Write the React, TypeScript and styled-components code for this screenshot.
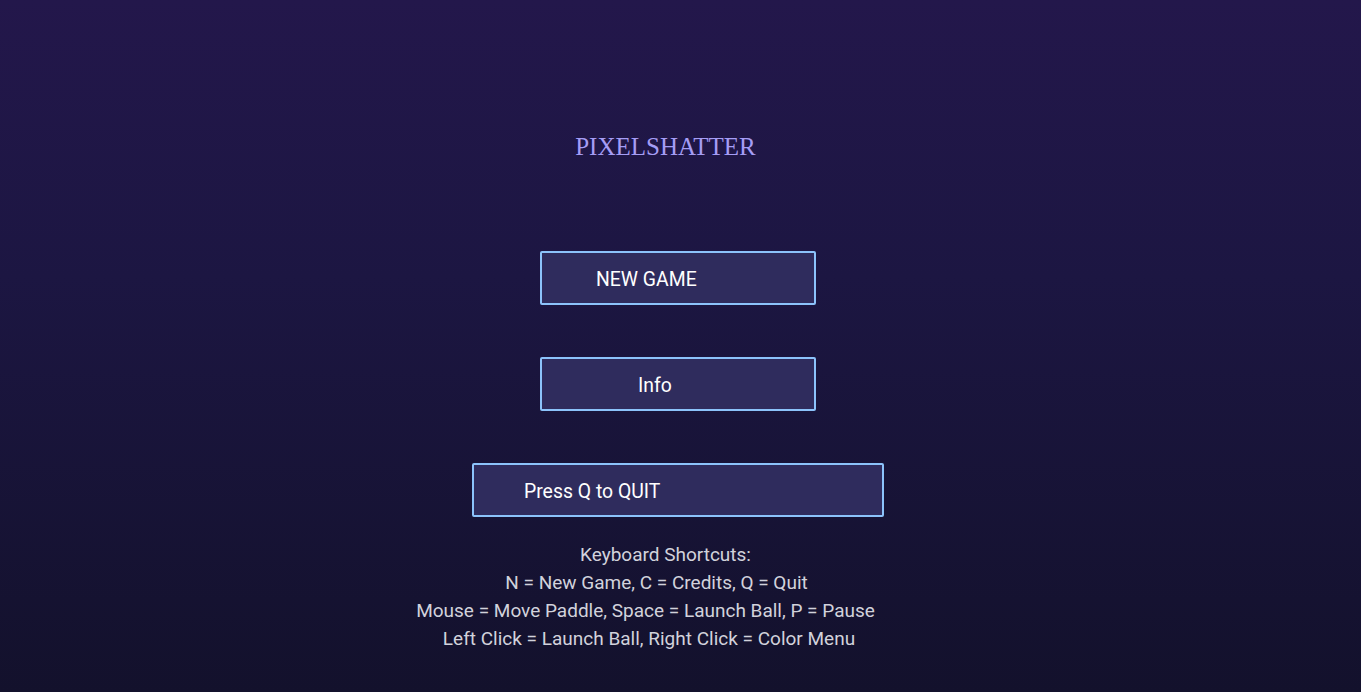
import React from "react";
import styled, { createGlobalStyle } from "styled-components";

const Global = createGlobalStyle`
  html, body { margin: 0; padding: 0; height: 100%; }
  body { background: #13112c; overflow: hidden; }
  #root { height: 100%; }
`;

const Screen = styled.div`
  width: 100vw;
  height: 100vh;
  background: linear-gradient(180deg, #23174b 0%, #1c1642 40%, #13112c 100%);
  display: flex;
  flex-direction: column;
  align-items: center;
  box-sizing: border-box;
  padding-top: 132px;
  padding-right: 5px;
`;

const Title = styled.h1`
  margin: 0 25px 0 0;
  font-family: "Liberation Serif", "Times New Roman", serif;
  font-weight: 400;
  font-size: 25px;
  line-height: 30px;
  color: #a59df5;
`;

const Menu = styled.div`
  margin-top: 89px;
  display: flex;
  flex-direction: column;
  align-items: center;
  gap: 52px;
`;

const MenuButton = styled.button<{ $w: number; $pad: number }>`
  width: ${(p) => p.$w}px;
  height: 54px;
  box-sizing: border-box;
  border: 2px solid #8cc3fb;
  border-radius: 2px;
  background: #2f2c5d;
  color: #ffffff;
  font-family: Roboto, "Liberation Sans", Arial, sans-serif;
  font-size: 19.4px;
  text-align: left;
  padding: 2px 0 0 ${(p) => p.$pad}px;
  margin: 0;
  cursor: pointer;
`;

const Shortcuts = styled.div`
  margin-top: 24px;
  display: flex;
  flex-direction: column;
  align-items: center;
  font-family: Roboto, "Liberation Sans", Arial, sans-serif;
  font-size: 19px;
  line-height: 28px;
  color: #d2d2dc;
  text-align: center;
`;

const Line = styled.div<{ $shift: number }>`
  margin-right: ${(p) => p.$shift * 2}px;
  white-space: nowrap;
`;

export default function App() {
  return (
    <>
      <Global />
      <Screen>
        <Title>PIXELSHATTER</Title>
        <Menu>
          <MenuButton $w={276} $pad={54}>NEW GAME</MenuButton>
          <MenuButton $w={276} $pad={96}>Info</MenuButton>
          <MenuButton $w={412} $pad={50}>Press Q to QUIT</MenuButton>
        </Menu>
        <Shortcuts>
          <Line $shift={12.5}>Keyboard Shortcuts:</Line>
          <Line $shift={21.5}>N = New Game, C = Credits, Q = Quit</Line>
          <Line $shift={32.5}>Mouse = Move Paddle, Space = Launch Ball, P = Pause</Line>
          <Line $shift={29}>Left Click = Launch Ball, Right Click = Color Menu</Line>
        </Shortcuts>
      </Screen>
    </>
  );
}
